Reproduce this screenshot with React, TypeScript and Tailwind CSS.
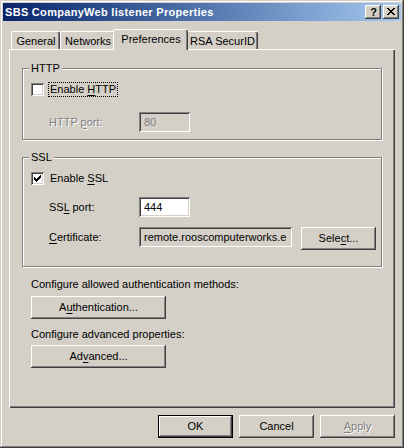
import React from "react";

const raised =
  "shadow-[inset_-1px_-1px_#404040,inset_1px_1px_#ffffff,inset_-2px_-2px_#808080,inset_2px_2px_#d4d0c8]";
const sunken =
  "shadow-[inset_1px_1px_#808080,inset_-1px_-1px_#ffffff,inset_2px_2px_#404040,inset_-2px_-2px_#d4d0c8]";

function U({ children }: { children: React.ReactNode }) {
  return <span className="underline underline-offset-[2px]">{children}</span>;
}

function Checkbox({ checked }: { checked?: boolean }) {
  return (
    <div className={`w-[13px] h-[13px] bg-white shrink-0 ${sunken}`}>
      {checked && (
        <svg width="13" height="13" viewBox="0 0 13 13" className="block">
          <path d="M3 5h1v1h1v1h1V6h1V5h1V4h1V3h1v3H9v1H8v1H7v1H6v1H5V9H4V8H3z" fill="#000" />
        </svg>
      )}
    </div>
  );
}

function Button({
  children,
  className = "",
  disabled,
  def,
}: {
  children: React.ReactNode;
  className?: string;
  disabled?: boolean;
  def?: boolean;
}) {
  if (def) {
    return (
      <div className={`border border-black ${className}`}>
        <div className={`w-full h-full flex items-center justify-center bg-[#d4d0c8] ${raised}`}>
          {children}
        </div>
      </div>
    );
  }
  return (
    <div
      className={`flex items-center justify-center bg-[#d4d0c8] ${raised} ${
        disabled ? "text-[#808080] [text-shadow:1px_1px_#ffffff]" : ""
      } ${className}`}
    >
      {children}
    </div>
  );
}

function Group({
  label,
  className = "",
  children,
}: {
  label: string;
  className?: string;
  children: React.ReactNode;
}) {
  return (
    <div
      className={`relative border border-[#808080] shadow-[inset_1px_1px_#ffffff,1px_1px_#ffffff] ${className}`}
    >
      <span className="absolute -top-[7px] left-[6px] px-[2px] bg-[#d4d0c8] leading-[13px]">
        {label}
      </span>
      {children}
    </div>
  );
}

function Tab({
  children,
  className = "",
  selected,
}: {
  children: React.ReactNode;
  className?: string;
  selected?: boolean;
}) {
  return (
    <div
      className={`flex justify-center bg-[#d4d0c8] border-l border-t border-white rounded-tl-[2px] rounded-tr-[2px] shadow-[inset_-1px_0_#404040,inset_-2px_0_#808080] ${
        selected ? "h-[21px] -mb-[1px] relative z-10 pt-[3px] -mx-[2px]" : "h-[18px] pt-[3px]"
      } ${className}`}
    >
      <span className="leading-[13px]">{children}</span>
    </div>
  );
}

export default function App() {
  return (
    <div className="w-[404px] h-[448px] bg-[#d4d0c8] p-[3px] flex flex-col font-['Liberation_Sans',Arial,sans-serif] text-[11px] text-black leading-[13px] shadow-[inset_-1px_-1px_#404040,inset_1px_1px_#d4d0c8,inset_-2px_-2px_#808080,inset_2px_2px_#ffffff] select-none">
      {/* Title bar */}
      <div className="h-[18px] flex items-center bg-linear-to-r from-[#0a246a] to-[#a6caf0] pl-[2px] pr-[2px] shrink-0">
        <span className="text-white font-bold text-[11px] leading-[13px] tracking-[0.3px] flex-1">
          SBS CompanyWeb listener Properties
        </span>
        <div className={`w-[16px] h-[14px] bg-[#d4d0c8] ${raised} flex items-center justify-center`}>
          <span className="font-bold text-[11px] leading-[11px] pl-[1px]">?</span>
        </div>
        <div className={`w-[16px] h-[14px] ml-[2px] bg-[#d4d0c8] ${raised} flex items-center justify-center`}>
          <svg width="8" height="7" viewBox="0 0 8 7" className="block -mt-[1px]">
            <path
              d="M0 0h2v1h1v1h2V1h1V0h2v1H7v1H6v1H5v1h1v1h1v1h1v1H6V6H5V5H3v1H2v1H0V6h1V5h1V4h1V3H2V2H1V1H0z"
              fill="#000"
            />
          </svg>
        </div>
      </div>

      {/* Body */}
      <div className="flex flex-col px-[6px]">
        {/* Tabs */}
        <div className="flex items-end mt-[8px] pl-[2px]">
          <Tab className="w-[49px]">General</Tab>
          <Tab className="w-[55px]">Networks</Tab>
          <Tab className="w-[75px]" selected>
            Preferences
          </Tab>
          <Tab className="w-[72px]">RSA SecurID</Tab>
        </div>

        {/* Panel */}
        <div className="h-[359px] border-l border-t border-white shadow-[inset_-1px_-1px_#404040,inset_-2px_-2px_#808080] pl-[12px] pr-[13px] pt-[18px]">
          <Group label="HTTP" className="h-[72px] pl-[8px] pt-[13px]">
            <div className="flex items-center">
              <Checkbox />
              <span className="ml-[4px] border border-dotted border-black px-[1px] leading-[13px]">
                Enable <U>H</U>TTP
              </span>
            </div>
            <div className="flex items-center mt-[15px]">
              <span className="w-[108px] pl-[18px] text-[#808080] [text-shadow:1px_1px_#ffffff]">
                HTTP <U>p</U>ort:
              </span>
              <div className={`w-[51px] h-[20px] pl-[5px] flex items-center text-[#808080] ${sunken}`}>
                80
              </div>
            </div>
          </Group>

          <Group label="SSL" className="h-[110px] mt-[17px] pl-[8px] pt-[14px]">
            <div className="flex items-center">
              <Checkbox checked />
              <span className="ml-[5px] px-[1px] leading-[13px]">
                Enable <U>S</U>SL
              </span>
            </div>
            <div className="flex items-center mt-[12px]">
              <span className="w-[108px] pl-[18px]">
                SS<U>L</U> port:
              </span>
              <div className={`w-[51px] h-[20px] pl-[5px] flex items-center bg-white ${sunken}`}>
                444
              </div>
            </div>
            <div className="flex items-start mt-[10px]">
              <span className="w-[108px] pl-[18px] mt-[4px]">
                <U>C</U>ertificate:
              </span>
              <div
                className={`w-[153px] h-[20px] pl-[5px] pr-[3px] flex items-center overflow-hidden whitespace-nowrap ${sunken}`}
              >
                remote.rooscomputerworks.e
              </div>
              <Button className="w-[75px] h-[23px] ml-[9px]">
                Sele<U>c</U>t...
              </Button>
            </div>
          </Group>

          <div className="flex flex-col items-start pl-[9px]">
            <span className="mt-[11px]">Configure allowed authentication methods:</span>
            <Button className="w-[135px] h-[23px] mt-[5px]">
              A<U>u</U>thentication...
            </Button>
            <span className="mt-[9px]">Configure advanced properties:</span>
            <Button className="w-[135px] h-[23px] mt-[4px]">
              Ad<U>v</U>anced...
            </Button>
          </div>
        </div>

        {/* Bottom buttons */}
        <div className="flex justify-end gap-[6px] mt-[7px]">
          <Button className="w-[75px] h-[23px]" def>
            OK
          </Button>
          <Button className="w-[75px] h-[23px]">Cancel</Button>
          <Button className="w-[75px] h-[23px]" disabled>
            <U>A</U>pply
          </Button>
        </div>
      </div>
    </div>
  );
}
